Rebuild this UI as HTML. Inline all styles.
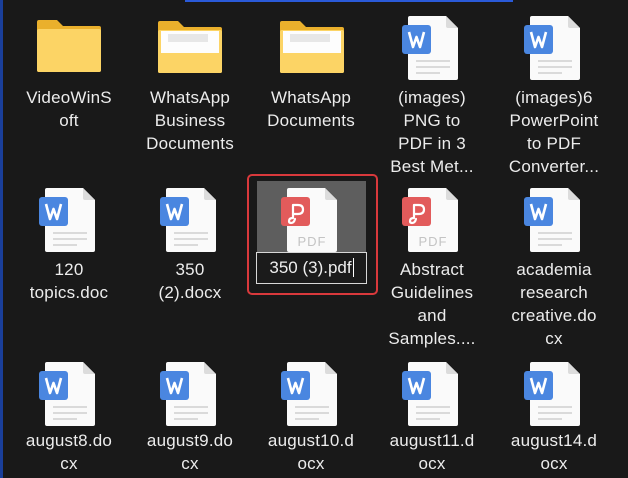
<!DOCTYPE html>
<html><head><meta charset="utf-8"><style>
body{margin:0;width:628px;height:478px;background:#191919;overflow:hidden;position:relative;font-family:"Segoe UI","Liberation Sans",sans-serif}
.l{position:absolute;left:0;top:0;width:3px;height:478px;background:#1a3f9a}
.t{position:absolute;left:185px;top:0;width:328px;height:2px;background:#2a5ad8}
.ic{position:absolute;width:56px;height:66px}
.tx{position:absolute;width:122px;text-align:center;color:#ececec;font-size:17px;line-height:23px;letter-spacing:0.2px}
.fd{position:absolute;width:64px;height:52px}
</style></head><body>
<div class="l"></div><div class="t"></div>
<svg width="0" height="0" style="position:absolute">
<defs>
<symbol id="pg" viewBox="0 0 56 66"><path d="M8 0H44L56 12V62Q56 64 54 64H8Q6 64 6 62V2Q6 0 8 0Z" fill="#fafafa"/><path d="M44 0V10Q44 12 46 12H56Z" fill="#dcdcdc"/></symbol>
<symbol id="w" viewBox="0 0 56 66"><use href="#pg"/><rect x="0" y="9" width="29" height="29" rx="3" fill="#4a86e0"/><path d="M7 16L11 31L14.5 21L18 31L22 16" stroke="#fff" stroke-width="2.6" fill="none" stroke-linejoin="round"/><path d="M14 45H48M14 51H48M14 57H38" stroke="#c8c8c8" stroke-width="1.3"/></symbol>
<symbol id="p" viewBox="0 0 56 66"><use href="#pg"/><rect x="0" y="9" width="29" height="29" rx="3" fill="#e25b5b"/><path d="M12 17V30M12 17H17Q22 17 22 21.5Q22 26 17 26H12M12 30Q8 30 8 33Q8 35 10 35Q13 35 14 31" stroke="#fff" stroke-width="2.2" fill="none" stroke-linecap="round"/><text x="31" y="58" text-anchor="middle" font-family="Liberation Sans,sans-serif" font-size="13" fill="#c4c4c4" letter-spacing="1">PDF</text></symbol>
<symbol id="f" viewBox="0 0 64 52"><path d="M2 0H20L26 6H62Q64 6 64 8V50Q64 52 62 52H2Q0 52 0 50V2Q0 0 2 0Z" fill="#eab02c"/><path d="M0 11Q0 9 2 9H62Q64 9 64 11V50Q64 52 62 52H2Q0 52 0 50Z" fill="#fcd465"/></symbol>
<symbol id="f2" viewBox="0 0 64 52"><use href="#f"/><rect x="3" y="10" width="58" height="22" fill="#fdfdfd"/><rect x="10" y="13" width="40" height="8" fill="#d8d8d8" opacity=".6"/><path d="M0 32H64V50Q64 52 62 52H2Q0 52 0 50Z" fill="#fcd465"/></symbol>
</defs></svg>

<svg class="fd" style="left:37px;top:20px"><use href="#f"/></svg>
<svg class="fd" style="left:158px;top:21px"><use href="#f2"/></svg>
<svg class="fd" style="left:280px;top:21px"><use href="#f2"/></svg>
<svg class="ic" style="left:402px;top:16px"><use href="#w"/></svg>
<svg class="ic" style="left:524px;top:16px"><use href="#w"/></svg>
<div class="tx" style="left:8px;top:86px">VideoWinS<br>oft</div>
<div class="tx" style="left:129px;top:86px">WhatsApp<br>Business<br>Documents</div>
<div class="tx" style="left:250px;top:86px">WhatsApp<br>Documents</div>
<div class="tx" style="left:371px;top:86px">(images)<br>PNG to<br>PDF in 3<br>Best Met...</div>
<div class="tx" style="left:493px;top:86px">(images)6<br>PowerPoint<br>to PDF<br>Converter...</div>

<div style="position:absolute;left:247px;top:174px;width:127px;height:117px;border:2px solid #d9393c;border-radius:5px"></div>
<div style="position:absolute;left:257px;top:181px;width:109px;height:72px;background:#5e5e5e"></div>
<svg class="ic" style="left:281px;top:188px"><use href="#p"/></svg>
<div style="position:absolute;left:256px;top:252px;width:109px;height:30px;border:1px solid #d8d8d8;background:#1b1b1b;color:#eee;font-size:17px;line-height:30px;text-align:center">350 (3).pdf<span style="border-left:1px solid #fff;margin-left:1px"></span></div>

<svg class="ic" style="left:39px;top:188px"><use href="#w"/></svg>
<svg class="ic" style="left:160px;top:188px"><use href="#w"/></svg>
<svg class="ic" style="left:402px;top:188px"><use href="#p"/></svg>
<svg class="ic" style="left:524px;top:188px"><use href="#w"/></svg>
<div class="tx" style="left:8px;top:258px">120<br>topics.doc</div>
<div class="tx" style="left:129px;top:258px">350<br>(2).docx</div>
<div class="tx" style="left:371px;top:258px">Abstract<br>Guidelines<br>and<br>Samples....</div>
<div class="tx" style="left:493px;top:258px">academia<br>research<br>creative.do<br>cx</div>

<svg class="ic" style="left:39px;top:362px"><use href="#w"/></svg>
<svg class="ic" style="left:160px;top:362px"><use href="#w"/></svg>
<svg class="ic" style="left:281px;top:362px"><use href="#w"/></svg>
<svg class="ic" style="left:402px;top:362px"><use href="#w"/></svg>
<svg class="ic" style="left:524px;top:362px"><use href="#w"/></svg>
<div class="tx" style="left:8px;top:429px">august8.do<br>cx</div>
<div class="tx" style="left:129px;top:429px">august9.do<br>cx</div>
<div class="tx" style="left:250px;top:429px">august10.d<br>ocx</div>
<div class="tx" style="left:371px;top:429px">august11.d<br>ocx</div>
<div class="tx" style="left:493px;top:429px">august14.d<br>ocx</div>
</body></html>
